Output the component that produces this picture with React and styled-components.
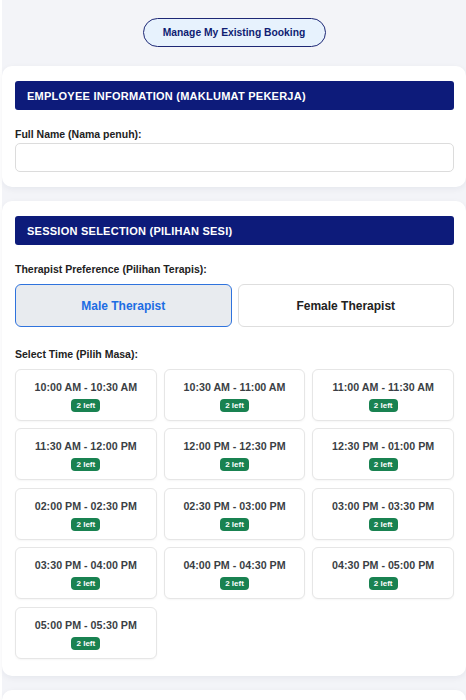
import React, { useState } from "react";
import styled, { createGlobalStyle } from "styled-components";

const Global = createGlobalStyle`
  html, body { margin: 0; padding: 0; background: #ffffff; }
  body { font-family: "Liberation Sans", Arial, sans-serif; }
  * { box-sizing: border-box; }
`;

const Page = styled.div`
  margin-left: 2px;
  background: #f3f4f8;
  min-height: 100vh;
  padding-top: 18px;
  display: flex;
  flex-direction: column;
`;

const TopBar = styled.div`
  display: flex;
  justify-content: center;
  margin-bottom: 19px;
`;

const ManageButton = styled.button`
  height: 29px;
  width: 183px;
  border-radius: 15px;
  border: 1px solid #1d2775;
  background: #e7f2fd;
  color: #0f1d72;
  font-family: "Liberation Sans", Arial, sans-serif;
  font-weight: 700;
  font-size: 10.3px;
  cursor: pointer;
`;

const Card = styled.section`
  background: #ffffff;
  border-radius: 10px;
  padding: 15px 12px ${(p) => p.$bottom || 15}px 13px;
  box-shadow: 0 2px 6px rgba(20, 30, 60, 0.06);
  margin-bottom: 14px;
  display: flex;
  flex-direction: column;
`;

const SectionHeader = styled.h2`
  margin: 0 0 18px;
  height: 29px;
  background: #0d1b7a;
  border-radius: 3px;
  color: #ffffff;
  font-size: 11px;
  font-weight: 700;
  letter-spacing: 0.25px;
  padding: 0 12px;
  display: flex;
  align-items: center;
`;

const Label = styled.label`
  display: block;
  font-size: 10.5px;
  font-weight: 700;
  color: #222;
  line-height: 13px;
  margin-bottom: ${(p) => p.$gap || 2}px;
  margin-top: ${(p) => p.$top || 0}px;
`;

const TextInput = styled.input`
  height: 29px;
  width: 100%;
  border: 1px solid #dcdcdc;
  border-radius: 5px;
  background: #fff;
  padding: 0 10px;
  font-family: inherit;
  font-size: 12px;
  outline: none;
`;

const OptionRow = styled.div`
  display: grid;
  grid-template-columns: 1fr 1fr;
  gap: 6px;
`;

const OptionButton = styled.button`
  height: 43px;
  border-radius: 6px;
  border: 1px solid ${(p) => (p.$active ? "#2f73dd" : "#dedede")};
  background: ${(p) => (p.$active ? "#e8ebef" : "#ffffff")};
  color: ${(p) => (p.$active ? "#1c6de3" : "#222")};
  font-family: "Liberation Sans", Arial, sans-serif;
  font-weight: 700;
  font-size: 12px;
  cursor: pointer;
`;

const TimeGrid = styled.div`
  display: grid;
  grid-template-columns: repeat(3, 1fr);
  gap: 7.4px 7px;
`;

const Slot = styled.button`
  height: 52px;
  background: #fff;
  border: 1px solid #e6e6e6;
  border-radius: 6px;
  box-shadow: 0 1px 2px rgba(0, 0, 0, 0.04);
  display: flex;
  flex-direction: column;
  align-items: center;
  padding: 11px 0 0;
  font-family: "Liberation Sans", Arial, sans-serif;
  cursor: pointer;
`;

const SlotTime = styled.span`
  font-size: 10.7px;
  font-weight: 700;
  color: #3b3f45;
  line-height: 13px;
`;

const Badge = styled.span`
  margin-top: 5px;
  height: 13px;
  padding: 0 5px;
  border-radius: 4px;
  background: #198251;
  color: #fff;
  font-size: 8px;
  font-weight: 700;
  line-height: 13px;
`;

const slots = [
  "10:00 AM - 10:30 AM",
  "10:30 AM - 11:00 AM",
  "11:00 AM - 11:30 AM",
  "11:30 AM - 12:00 PM",
  "12:00 PM - 12:30 PM",
  "12:30 PM - 01:00 PM",
  "02:00 PM - 02:30 PM",
  "02:30 PM - 03:00 PM",
  "03:00 PM - 03:30 PM",
  "03:30 PM - 04:00 PM",
  "04:00 PM - 04:30 PM",
  "04:30 PM - 05:00 PM",
  "05:00 PM - 05:30 PM",
];

export default function App() {
  const [pref, setPref] = useState("male");
  return (
    <>
      <Global />
      <Page>
        <TopBar>
          <ManageButton>Manage My Existing Booking</ManageButton>
        </TopBar>
        <Card>
          <SectionHeader>EMPLOYEE INFORMATION (MAKLUMAT PEKERJA)</SectionHeader>
          <Label>Full Name (Nama penuh):</Label>
          <TextInput type="text" />
        </Card>
        <Card $bottom={17}>
          <SectionHeader>SESSION SELECTION (PILIHAN SESI)</SectionHeader>
          <Label $gap={8}>Therapist Preference (Pilihan Terapis):</Label>
          <OptionRow>
            <OptionButton $active={pref === "male"} onClick={() => setPref("male")}>
              Male Therapist
            </OptionButton>
            <OptionButton $active={pref === "female"} onClick={() => setPref("female")}>
              Female Therapist
            </OptionButton>
          </OptionRow>
          <Label $top={21} $gap={8}>Select Time (Pilih Masa):</Label>
          <TimeGrid>
            {slots.map((s) => (
              <Slot key={s}>
                <SlotTime>{s}</SlotTime>
                <Badge>2 left</Badge>
              </Slot>
            ))}
          </TimeGrid>
        </Card>
        <Card />
      </Page>
    </>
  );
}
